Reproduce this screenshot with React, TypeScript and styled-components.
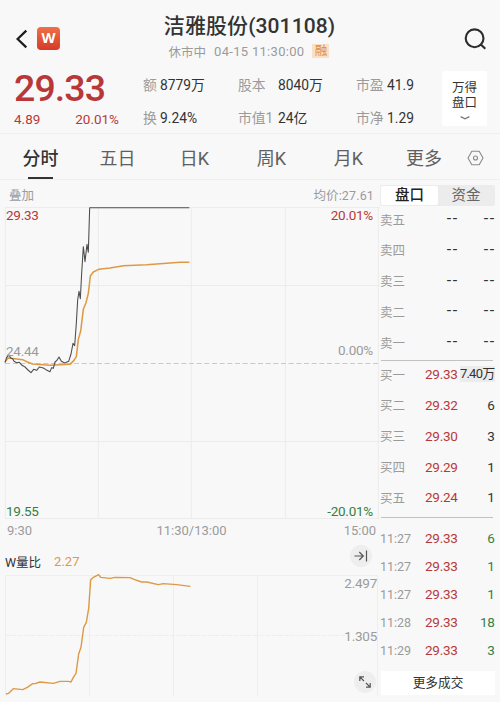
import React from "react"
import styled, { createGlobalStyle, css } from "styled-components"

const RED = "#b8383a"
const GREEN = "#35803f"
const GREY = "#9b9b9b"
const INK = "#333333"
const ORANGE = "#dd9a45"

const GlobalStyle = createGlobalStyle`
  * {
    box-sizing: border-box;
  }

  body {
    margin: 0;
    background: #f8f8f8;
    color: ${INK};
    font-family: Roboto, "Noto Sans CJK SC", sans-serif;
    font-size: 13px;
  }
`

const Page = styled.div`
  width: 500px;
  height: 702px;
  overflow: hidden;
  white-space: nowrap;
`

/* Title bar */

const NavBar = styled.header`
  display: grid;
  grid-template-columns: 100px 1fr 100px;
  height: 66px;
`

const NavLeft = styled.div`
  display: flex;
  align-items: center;
  gap: 9px;
  padding: 11px 0 0 15px;
`

const NavRight = styled.div`
  display: flex;
  align-items: center;
  justify-content: flex-end;
  padding: 11px 13px 0 0;
`

const Logo = styled.div`
  width: 23px;
  height: 23px;
  border-radius: 4px;
  background: linear-gradient(#ee7148, #d63a27);
  color: white;
  font-family: "Open Sans", sans-serif;
  font-size: 14.5px;
  font-weight: 700;
  line-height: 22px;
  text-align: center;
`

const NavTitle = styled.div`
  display: flex;
  flex-direction: column;
  align-items: center;
  padding-top: 12px;
`

const StockName = styled.h1`
  margin: 0 1px 0 0;
  font-size: 21px;
  font-weight: 500;
  line-height: 28px;
  letter-spacing: 0.1px;
`

const Status = styled.div`
  display: flex;
  align-items: center;
  gap: 8px;
  height: 22px;
  margin-right: 2px;
  color: ${GREY};
  font-size: 12.5px;
`

const Clock = styled.span`
  font-size: 13px;
  letter-spacing: 0.3px;
`

const MarginTag = styled.span`
  width: 17px;
  height: 14px;
  background: #fae0c4;
  color: #df8d3c;
  font-size: 12.5px;
  line-height: 13px;
  text-align: center;
`

/* Quote */

const Quote = styled.section`
  display: grid;
  grid-template-columns: 129px 95px 118px 86px 45px;
  height: 68px;
  padding-left: 14px;
  border-bottom: 1px solid #efefef;
`

const LastPrice = styled.div`
  color: ${RED};
  font-size: 37.5px;
  font-weight: 500;
  line-height: 44px;
  letter-spacing: -0.9px;
`

const Change = styled.div`
  display: flex;
  justify-content: space-between;
  width: 105px;
  color: ${RED};
  font-size: 13.5px;
  line-height: 18px;
`

const Stats = styled.div`
  display: grid;
  grid-template-rows: 33px 33px;
  align-items: center;
  padding-top: 2px;
`

const Stat = styled.div<{ $label: number }>`
  display: grid;
  grid-template-columns: ${(p) => p.$label}px auto;
  font-size: 13.8px;
  line-height: 20px;
`

const Label = styled.span`
  color: ${GREY};
`

const BoardButton = styled.button`
  display: flex;
  flex-direction: column;
  align-items: center;
  width: 45px;
  height: 55px;
  margin-top: 5px;
  padding: 9px 0 0;
  border: 0;
  border-radius: 2px;
  background: white;
  color: ${INK};
  font: 12.5px/15px Roboto, "Noto Sans CJK SC", sans-serif;
`

/* Period tabs */

const Tabs = styled.nav`
  display: grid;
  grid-template-columns: 77px 77px 77px 77px 77px 74px 1fr;
  height: 46px;
  padding-left: 2px;
  border-bottom: 1px solid #efefef;
`

const Tab = styled.div<{ $active?: boolean }>`
  display: flex;
  flex-direction: column;
  align-items: center;
  justify-content: flex-end;
  gap: 3px;
  color: #606060;
  font-size: 18px;
  line-height: 30px;

  &::after {
    content: "";
    width: 25px;
    height: 2px;
  }

  ${(p) =>
    p.$active &&
    css`
      color: ${INK};
      font-weight: 500;

      &::after {
        background: ${INK};
      }
    `}
`

const TabSettings = styled.div`
  display: flex;
  align-items: center;
  padding: 3px 0 0 6px;
`

/* Charts */

const Body = styled.main`
  display: grid;
  grid-template-columns: 380px 115px;
`

const ChartHead = styled.div`
  display: flex;
  justify-content: space-between;
  height: 27px;
  padding: 5px 6px 0 9px;
  color: ${GREY};
  font-size: 12.5px;
  line-height: 21px;
`

const Average = styled.span`
  letter-spacing: 0.15px;
`

const ChartArea = styled.div<{ $height: number }>`
  position: relative;
  height: ${(p) => p.$height}px;

  > svg {
    display: block;
  }
`

const AxisValue = styled.span<{ $top: number; $right?: number; $color?: string }>`
  position: absolute;
  top: ${(p) => p.$top}px;
  ${(p) => (p.$right === undefined ? "left: 6px;" : `right: ${p.$right}px;`)}
  color: ${(p) => p.$color || GREY};
  font-size: 13.5px;
  line-height: 16px;
  letter-spacing: -0.25px;
`

const TimeAxis = styled.div`
  display: grid;
  grid-template-columns: 1fr 1fr 1fr;
  height: 24px;
  padding: 0 4px 0 7px;
  color: ${GREY};
  font-size: 13px;
  line-height: 23px;
  text-align: center;

  > :first-child {
    text-align: left;
  }

  > :last-child {
    text-align: right;
  }
`

const IndicatorHead = styled.div`
  display: flex;
  align-items: center;
  gap: 13px;
  height: 31px;
  padding: 6px 8px 0 5px;
  font-size: 12.5px;
`

const IndicatorValue = styled.span`
  color: ${ORANGE};
  font-size: 13px;
`

const RoundButton = styled.span`
  display: flex;
  align-items: center;
  justify-content: center;
  width: 22px;
  height: 22px;
  border-radius: 50%;
  background: #eeeeee;
`

const JumpButton = styled(RoundButton)`
  margin: -11px 0 0 auto;
`

const ExpandButton = styled(RoundButton)`
  position: absolute;
  top: 97px;
  left: 354px;
`

/* Order book */

const Switch = styled.div`
  display: grid;
  grid-template-columns: 57px 1fr;
  height: 21px;
  margin-top: 5px;
  padding: 1px;
  border-radius: 2px;
  background: #ececec;
`

const SwitchItem = styled.span<{ $active?: boolean }>`
  border-radius: 2px;
  background: ${(p) => (p.$active ? "white" : "none")};
  color: ${(p) => (p.$active ? "#222" : "#666")};
  font-size: 14.5px;
  font-weight: ${(p) => (p.$active ? 500 : 400)};
  line-height: 19px;
  text-align: center;
`

const Levels = styled.div`
  display: grid;
  grid-auto-rows: 28px;
  row-gap: 2.8px;
  margin-top: -1px;
`

const Trades = styled.div`
  display: grid;
  grid-auto-rows: 28px;
  padding: 6px 0 7px;
`

const BookRow = styled.div`
  display: grid;
  grid-template-columns: 34px 43.5px 37px;
  align-items: center;
  font-size: 13.5px;
  letter-spacing: -0.3px;
  text-align: right;

  > ${Label} {
    font-size: 12.5px;
    letter-spacing: 0;
    text-align: left;
  }
`

const Price = styled.span`
  color: ${RED};
`

const Amount = styled.span<{ $green?: boolean; $flash?: boolean }>`
  justify-self: end;
  color: ${(p) => (p.$green ? GREEN : INK)};
  line-height: 16px;

  ${(p) =>
    p.$flash &&
    css`
      background: #ececec;
      font-size: 13px;
      letter-spacing: -0.75px;
    `}
`

const Blank = styled.span`
  margin-right: -1px;
  font-size: 16px;
  line-height: 16px;
  letter-spacing: 1.4px;
`

const Rule = styled.hr<{ $space: number }>`
  width: 112px;
  height: 1px;
  margin: ${(p) => p.$space}px 0 0 1px;
  border: 0;
  background: #c2c2c2;
`

const MoreTrades = styled.div`
  height: 24px;
  margin-left: 1px;
  background: white;
  font-size: 12.7px;
  line-height: 24px;
  text-align: center;
`

const stats = [
  { label: 17, rows: [["额", "8779万"], ["换", "9.24%"]] },
  { label: 40, rows: [["股本", "8040万"], ["市值1", "24亿"]] },
  { label: 31, rows: [["市盈", "41.9"], ["市净", "1.29"]] },
]

const periods = ["分时", "五日", "日K", "周K", "月K", "更多"]

const asks = ["卖五", "卖四", "卖三", "卖二", "卖一"]

const bids = [
  ["买一", "29.33", "7.40万"],
  ["买二", "29.32", "6"],
  ["买三", "29.30", "3"],
  ["买四", "29.29", "1"],
  ["买五", "29.24", "1"],
]

const trades = [
  ["11:27", "29.33", "6"],
  ["11:27", "29.33", "1"],
  ["11:27", "29.33", "1"],
  ["11:28", "29.33", "18"],
  ["11:29", "29.33", "3"],
]

// chart units are a third of a pixel
const pricePoints =
  "15,488 20,472 27,465 32,474 38,476 42,484 50,488 58,487 66,496 74,500 84,510 93,518 101,508 110,511 118,501 130,504 138,509 150,515 155,503 160,505 165,486 170,482 177,471 184,484 194,489 206,484 213,462 219,430 224,437 229,370 233,300 237,274 241,296 245,220 250,140 255,185 261,133 265,157 269,23 568,23"

const averagePoints =
  "15,486 24,474 45,476 68,479 82,486 98,492 150,496 210,493 222,481 229,470 235,418 242,393 250,328 258,308 265,280 271,228 280,216 296,208 330,204 370,197 440,194 500,190 540,187 568,187"

const volumePoints =
  "18,612 26,610 40,596 68,599 82,592 98,581 105,581 120,576 160,580 180,574 205,574 213,576 220,562 228,550 236,492 243,472 251,412 259,397 266,355 272,270 280,262 296,254 302,262 330,265 345,262 390,263 402,268 425,276 440,276 475,284 490,281 530,284 571,289"

const PriceChart = () => (
  <svg width="380" height="312" viewBox="0 21 1140 936" fill="none">
    <path
      d="M15 22.5H1156M15 256.5H1156M15 724.5H1156M15 955.5H1156M16 22V956M295 22V956M574 22V956M856 22V956M1135 22V956"
      stroke="#ececec"
      strokeWidth="3"
    />
    <path d="M15 490.5H1135" stroke="#c9c9c9" strokeWidth="3" strokeDasharray="15 8" />
    <polyline points={averagePoints} stroke={ORANGE} strokeWidth="4.6" strokeLinejoin="round" />
    <polyline points={pricePoints} stroke="#4c4c4c" strokeWidth="3.2" strokeLinejoin="round" />
  </svg>
)

const VolumeChart = () => (
  <svg width="380" height="128" viewBox="0 252 1140 384" fill="none">
    <path
      d="M16 256.5H1133M16.5 256V618M268.5 256V618M520.5 256V618M772.5 256V618M1132.5 256V618"
      stroke="#eeeeee"
      strokeWidth="3"
    />
    <path d="M16 436.5H1035" stroke="#eeeeee" strokeWidth="3" strokeDasharray="15 4" />
    <polyline points={volumePoints} stroke={ORANGE} strokeWidth="4.2" strokeLinejoin="round" />
  </svg>
)

const App = () => (
  <Page>
    <GlobalStyle />

    <NavBar>
      <NavLeft>
        <svg width="13" height="20" viewBox="0 0 13 20" fill="none">
          <path d="M11.3 1.6L2.6 10l8.7 8.4" stroke="#1c1c1c" strokeWidth="2.2" />
        </svg>
        <Logo>W</Logo>
      </NavLeft>
      <NavTitle>
        <StockName>洁雅股份(301108)</StockName>
        <Status>
          <span>休市中</span>
          <Clock>04-15 11:30:00</Clock>
          <MarginTag>融</MarginTag>
        </Status>
      </NavTitle>
      <NavRight>
        <svg width="24" height="24" viewBox="0 0 24 24" fill="none" stroke="#2b2b2b" strokeWidth="2.1">
          <circle cx="11.6" cy="11.3" r="8.9" />
          <path d="M17.6 17.3l4.7 4.5" />
        </svg>
      </NavRight>
    </NavBar>

    <Quote>
      <div>
        <LastPrice>29.33</LastPrice>
        <Change>
          <span>4.89</span>
          <span>20.01%</span>
        </Change>
      </div>
      {stats.map((group) => (
        <Stats key={group.label}>
          {group.rows.map(([label, value]) => (
            <Stat key={label} $label={group.label}>
              <Label>{label}</Label>
              <span>{value}</span>
            </Stat>
          ))}
        </Stats>
      ))}
      <BoardButton>
        <span>万得</span>
        <span>盘口</span>
        <svg width="10" height="14" viewBox="0 0 10 14" fill="none">
          <path d="M.6 6.6L5 8.8l4.4-2.2" stroke="#777" strokeWidth="1.2" />
        </svg>
      </BoardButton>
    </Quote>

    <Tabs>
      {periods.map((name, i) => (
        <Tab key={name} $active={i === 0}>
          {name}
        </Tab>
      ))}
      <TabSettings>
        <svg width="17" height="16" viewBox="0 0 17 16" fill="none" stroke="#8a8a8a" strokeWidth="1.1">
          <path d="M4.8 1.2h7.4L16 8l-3.8 6.8H4.8L1 8z" strokeLinejoin="round" />
          <circle cx="8.5" cy="8" r="2" />
        </svg>
      </TabSettings>
    </Tabs>

    <Body>
      <section>
        <ChartHead>
          <span>叠加</span>
          <Average>均价:27.61</Average>
        </ChartHead>
        <ChartArea $height={312}>
          <PriceChart />
          <AxisValue $top={0} $color={RED}>29.33</AxisValue>
          <AxisValue $top={136}>24.44</AxisValue>
          <AxisValue $top={296} $color={GREEN}>19.55</AxisValue>
          <AxisValue $top={0} $right={7} $color={RED}>20.01%</AxisValue>
          <AxisValue $top={135} $right={7}>0.00%</AxisValue>
          <AxisValue $top={296} $right={7} $color={GREEN}>-20.01%</AxisValue>
        </ChartArea>
        <TimeAxis>
          <span>9:30</span>
          <span>11:30/13:00</span>
          <span>15:00</span>
        </TimeAxis>
        <IndicatorHead>
          <span>W量比</span>
          <IndicatorValue>2.27</IndicatorValue>
          <JumpButton>
            <svg width="14" height="12" viewBox="0 0 14 12" fill="none" stroke="#555" strokeWidth="1.2">
              <path d="M.5 6h8.6M5.3 2L9.3 6l-4 4M12.5.5v11" />
            </svg>
          </JumpButton>
        </IndicatorHead>
        <ChartArea $height={128}>
          <VolumeChart />
          <AxisValue $top={1} $right={3}>2.497</AxisValue>
          <AxisValue $top={54} $right={3}>1.305</AxisValue>
          <ExpandButton>
            <svg width="12" height="12" viewBox="0 0 12 12" fill="none" stroke="#555" strokeWidth="1.2">
              <path d="M.8 5V.8H5M.8.8l4.2 4.2M11.2 7v4.2H7M11.2 11.2L7 7" />
            </svg>
          </ExpandButton>
        </ChartArea>
      </section>

      <aside>
        <Switch>
          <SwitchItem $active>盘口</SwitchItem>
          <SwitchItem>资金</SwitchItem>
        </Switch>
        <Levels>
          {asks.map((name) => (
            <BookRow key={name}>
              <Label>{name}</Label>
              <Blank>--</Blank>
              <Blank>--</Blank>
            </BookRow>
          ))}
        </Levels>
        <Rule $space={4} />
        <Levels>
          {bids.map(([name, price, amount], i) => (
            <BookRow key={name}>
              <Label>{name}</Label>
              <Price>{price}</Price>
              <Amount $flash={i === 0}>{amount}</Amount>
            </BookRow>
          ))}
        </Levels>
        <Rule $space={6} />
        <Trades>
          {trades.map(([time, price, amount], i) => (
            <BookRow key={i}>
              <Label>{time}</Label>
              <Price>{price}</Price>
              <Amount $green>{amount}</Amount>
            </BookRow>
          ))}
        </Trades>
        <MoreTrades>更多成交</MoreTrades>
      </aside>
    </Body>
  </Page>
)

export default App
